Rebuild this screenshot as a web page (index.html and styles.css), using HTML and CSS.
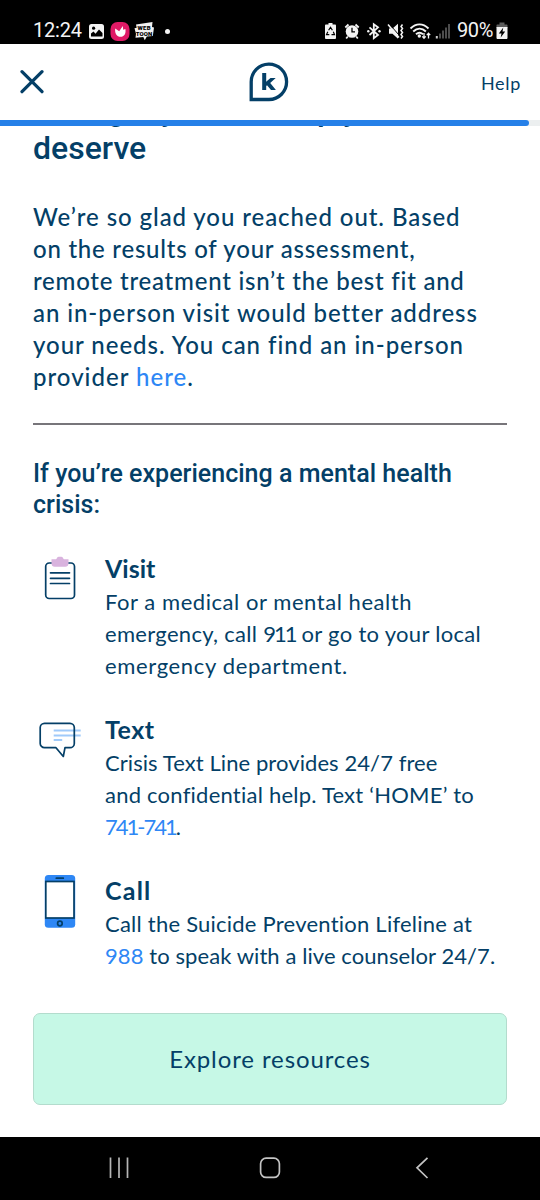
FILE: index.html
```html
<!DOCTYPE html>
<html lang="en">
<head>
<meta charset="utf-8">
<title>Get the help you deserve</title>
<link rel="stylesheet" href="styles.css">
</head>
<body>
<div class="screen">
  <div class="status">
    <span class="clock">12:24</span>
    <svg class="status-left" width="86" height="20" viewBox="0 0 86 20">
      <rect x="1" y="3" width="15" height="15" rx="2.5" fill="#f4f4f4"/>
      <circle cx="5.6" cy="7.2" r="1.6" fill="#000"/>
      <path d="M3 15.5v-3l2.5-2 2 2.3L11 8.5l3.500 3.500v3.500z" fill="#000"/>
      <rect x="22.500" y="1" width="19" height="19" rx="7" fill="#e01a66"/>
      <path d="M27.200 7.500l4 2.800 3.600-5.300.4 3.800 2.200-.8c.8 4.800-1.200 7.800-4.800 7.800-3.800 0-6-3.300-5.400-8.300z" fill="#fff"/>
      <path d="M48 3.500L64.500 1l-.5 5 2 .5-1.200 8.500-6 .6-2 3.600-1.500-3.200-7.800.8.500-4-1.500-5.500 2.200-.6z" fill="#f1f1f1"/>
      <text x="49.500" y="9.300" class="toon" textLength="13">WEB</text>
      <text x="47.800" y="14.800" class="toon" textLength="16.500">TOON</text>
      <circle cx="79.500" cy="10.500" r="2.500" fill="#f4f4f4"/>
    </svg>
    <svg class="status-right" width="128" height="20" viewBox="325 20 128 20">
      <path d="M329.500 22h4v1.600h2.300c.8 0 1.200.5 1.200 1.200v12c0 .8-.4 1.200-1.200 1.200h-8.600c-.8 0-1.200-.4-1.200-1.200v-12c0-.7.400-1.200 1.200-1.200h2.300z" fill="#f4f4f4"/>
      <path d="M329.600 29.300l1.900-3 1.900 3M334.300 30.800l1.200 2.800h-3M330.300 33.600h-2.800l1.300-2.900" fill="none" stroke="#000" stroke-width="1.200"/>
      <circle cx="353" cy="30.500" r="6.300" fill="#f4f4f4"/>
      <path d="M353 26.800v4h3" fill="none" stroke="#000" stroke-width="1.300"/>
      <path d="M346.300 26.500l3.200-3M359.700 26.500l-3.200-3M348.800 35.500l-1.600 2M357.200 35.500l1.600 2" stroke="#f4f4f4" stroke-width="1.800"/>
      <path d="M370.500 26.300l8.500 7.700-4.200 3.200v-14l4.200 3.200-8.500 7.600" fill="none" stroke="#f4f4f4" stroke-width="1.800"/>
      <circle cx="369.300" cy="30.200" r="1.200" fill="#f4f4f4"/><circle cx="380.500" cy="30.200" r="1.200" fill="#f4f4f4"/>
      <path d="M390 27.500h3.500l5.500-4.800v15l-5.500-5H390z" fill="#f4f4f4"/>
      <path d="M390.300 23l11 12.500" stroke="#000" stroke-width="1"/>
      <path d="M389 23.500l11 13" stroke="#f4f4f4" stroke-width="1.500"/>
      <path d="M403.500 23.500l-1.500 2 1.500 2-1.500 2 1.500 2-1.500 2 1.500 2-1.500 2" fill="none" stroke="#f4f4f4" stroke-width="1.500"/>
      <path d="M411.500 27.500c5.500-5.500 12.500-5.500 18 0M414.200 30.500c4-3.800 8.800-3.800 12.700 0M417 33.300c2.200-2 4.800-2 7 0" fill="none" stroke="#f4f4f4" stroke-width="1.900"/>
      <circle cx="420.300" cy="35" r="1.700" fill="#f4f4f4"/>
      <path d="M425 32v5.200m-1.700-1.800l1.700 1.900 1.700-1.900M429.500 37.500v-5.200m-1.700 1.800l1.700-1.900 1.700 1.900" fill="none" stroke="#f4f4f4" stroke-width="1.300"/>
      <path d="M437.800 37.500v-2.500" stroke="#d0d0d0" stroke-width="2"/>
      <path d="M441 37.500v-5M444 37.500v-8M447 37.500v-11M450 37.500v-14.500" stroke="#5a5a5a" stroke-width="1.700"/>
    </svg>
    <span class="percent">90%</span>
    <svg class="battery" width="12" height="18" viewBox="0 0 12 18">
      <path d="M3.500.500h5V2.500h2c.7 0 1 .4 1 1V6H.500V3.500c0-.6.300-1 1-1h2z" fill="#5c5c5c"/>
      <path d="M.500 5h11v10.800c0 .8-.4 1.200-1.200 1.200H1.700c-.8 0-1.200-.4-1.200-1.200z" fill="#f4f4f4"/>
      <path d="M7.300 5.500L2.800 11.500h2.700l-.8 4 4.500-6H6.500z" fill="#000"/>
    </svg>
  </div>
  <header class="topbar">
    <svg width="24" height="24" viewBox="0 0 24 24"><path d="M2 1.700l20 20M22 1.700l-20 20" stroke="#043f67" stroke-width="3.200" stroke-linecap="round"/></svg>
    <svg class="logo" width="40" height="40" viewBox="0 0 40 40">
      <path d="M2.200 37.500V20A17.700 17.700 0 1 1 20 37.500z" fill="none" stroke="#043f67" stroke-width="3.300"/>
      <path d="M15.200 11v17" fill="none" stroke="#043f67" stroke-width="4"/>
      <path d="M16.500 20.300L21.500 16h5.200l-5.500 5 5.700 7h-4.900l-4-4.800-1.500 1.300z" fill="#043f67"/>
    </svg>
    <span class="help">Help</span>
  </header>
  <div class="progress"><div class="progress-fill"></div></div>
  <main class="content">
    <h1>Let’s get you the help you<br>deserve</h1>
    <p class="intro">
      <span class="line s90">We’re so glad you reached out. Based</span>
      <span class="line s75">on the results of your assessment,</span>
      <span class="line s75">remote treatment isn’t the best fit and</span>
      <span class="line s90">an in-person visit would better address</span>
      <span class="line s95">your needs. You can find an in-person</span>
      <span class="line s100">provider <a>here</a>.</span>
    </p>
    <hr>
    <h2>If you’re experiencing a mental health<br>crisis:</h2>
    <section class="item">
      <svg class="icon" width="44" height="60" viewBox="0 0 44 60">
        <rect x="6.700" y="10" width="28.800" height="35.500" rx="3.500" fill="#fff" stroke="#043f67" stroke-width="1.700"/>
        <path d="M12.500 6.200h4c.8 0 1-.3 1.300-1 .5-1 1.200-1.400 3.200-1.400s2.700.4 3.200 1.400c.3.700.5 1 1.300 1h4v4.300c0 2-1.300 3.300-3.300 3.300H15.800c-2 0-3.300-1.300-3.300-3.300z" fill="#d9b3de"/>
        <path d="M11.500 19.800h19M11.500 25.300h19M11.500 30.500h19" stroke="#043f67" stroke-width="1.700" stroke-linecap="round"/>
      </svg>
      <div class="text">
        <h3>Visit</h3>
        <p>
          <span class="line s55">For a medical or mental health</span>
          <span class="line s35">emergency, call <span class="tight">911</span> or go to your local</span>
          <span class="line s65">emergency department.</span>
        </p>
      </div>
    </section>
    <section class="item">
      <svg class="icon" width="44" height="60" viewBox="0 0 44 60">
        <path d="M14.700 16.500h27M14.700 21.500h27M14.700 26h8.500" stroke="#a0cafa" stroke-width="2.200"/>
        <path d="M5.500 9.300h25.500a4.300 4.300 0 0 1 4.300 4.300v15.800a4.300 4.300 0 0 1-4.300 4.300H26L24.300 42.500 17 33.700H5.500a4.300 4.300 0 0 1-4.300-4.300V13.600a4.300 4.300 0 0 1 4.300-4.300z" fill="none" stroke="#043f67" stroke-width="1.700" stroke-linejoin="round"/>
      </svg>
      <div class="text">
        <h3 class="s50">Text</h3>
        <p>
          <span class="line s10">Crisis Text Line provides 24/7 free</span>
          <span class="line s20">and confidential help. Text ‘HOME’ to</span>
          <span class="line phone"><a>741-741</a>.</span>
        </p>
      </div>
    </section>
    <section class="item">
      <svg class="icon" width="44" height="60" viewBox="0 0 44 60">
        <rect x="5.800" y="0" width="30.400" height="52.700" rx="3.500" fill="#2e87f5"/>
        <rect x="6.800" y="6.500" width="28.200" height="36.500" fill="#fff" stroke="#043f67" stroke-width="1.700"/>
        <path d="M17.300 3.200h7" stroke="#043f67" stroke-width="1.700" stroke-linecap="round"/>
        <circle cx="20.900" cy="48.500" r="2.300" fill="none" stroke="#043f67" stroke-width="1.700"/>
      </svg>
      <div class="text">
        <h3 class="s120">Call</h3>
        <p>
          <span class="line s20">Call the Suicide Prevention Lifeline at</span>
          <span class="line s10"><a>988</a> to speak with a live counselor 24/7.</span>
        </p>
      </div>
    </section>
    <button class="explore">Explore resources</button>
  </main>
  <nav class="navbar">
    <svg width="20" height="22" viewBox="0 0 20 22"><path d="M1.500.500v20.500M10 .500v20.500M18.500.500v20.500" stroke="#b5b5b5" stroke-width="1.700"/></svg>
    <svg class="home" width="22" height="22" viewBox="0 0 22 22"><rect x="1.600" y="1.200" width="18.800" height="19.200" rx="5.500" fill="none" stroke="#c4c4c4" stroke-width="1.700"/></svg>
    <svg width="14" height="22" viewBox="0 0 14 22"><path d="M12.500.800L2 10.800l10.500 10.200" fill="none" stroke="#c4c4c4" stroke-width="1.700"/></svg>
  </nav>
</div>
</body>
</html>
```
FILE: styles.css
```css
* { box-sizing: border-box; }
body { margin: 0; background: #fff; color: #043f67; font-family: Lato, sans-serif; }
svg { display: block; flex: none; }
h1, h2, h3, p { margin: 0; }
a { color: #2e87f5; }

.screen { display: flex; flex-direction: column; width: 540px; height: 1200px; overflow: hidden; }

.status { display: flex; align-items: center; height: 44px; flex: none; padding: 17px 32px 0 33px; background: #000; color: #f4f4f4; font: 20px/27px Roboto, sans-serif; }
.clock { letter-spacing: -0.2px; width: 55px; }
.status-left { width: 86px; }
.toon { font: 900 6px Roboto, sans-serif; fill: #000; }
.status-right { margin-left: auto; }
.percent { width: 38px; margin-left: 5px; letter-spacing: -0.4px; }
.battery { margin-left: 1px; }

.topbar { display: grid; grid-template-columns: 228px 40px 1fr; align-items: center; height: 76px; flex: none; padding: 0 19px 0 20px; }
.logo { margin-left: 1px; }
.help { justify-self: end; padding-top: 1px; font-size: 18px; letter-spacing: 0.7px; }
.progress { height: 6px; flex: none; background: #eceff0; }
.progress-fill { width: 529px; height: 6px; background: #2680e8; border-radius: 0 3px 3px 0; }

.content { flex: 1; overflow: hidden; padding: 0 33px; }
h1 { margin-top: -35.500px; font: 500 32px/38px Roboto, sans-serif; white-space: nowrap; }
.line { display: block; white-space: nowrap; }
.intro { margin-top: 34px; font-size: 24px; line-height: 32px; font-weight: 500; }
hr { margin: 30.500px 0 0; border: 0; height: 1.500px; background: #77757a; }
h2 { margin-top: 33.500px; font: 500 25px/31px Roboto, sans-serif; letter-spacing: 0.02px; white-space: nowrap; }

.item { display: flex; gap: 22px; margin-top: 32px; padding-left: 6px; }
.item + .item { margin-top: 31px; }
.icon { margin-top: 1px; }
h3 { font-size: 25px; line-height: 32px; font-weight: 700; }
.item p { padding-top: 2px; font-size: 22px; line-height: 32px; }
.item .text { min-height: 97px; }
.tight { letter-spacing: -2px; }
.phone { letter-spacing: -2px; }

.s10 { letter-spacing: 0.08px; }
.s20 { letter-spacing: 0.23px; }
.s35 { letter-spacing: 0.31px; }
.s50 { letter-spacing: 0.5px; }
.s55 { letter-spacing: 0.55px; }
.s65 { letter-spacing: 0.65px; }
.s75 { letter-spacing: 0.76px; }
.s90 { letter-spacing: 0.92px; }
.s95 { letter-spacing: 0.97px; }
.s100 { letter-spacing: 1px; }
.s120 { letter-spacing: 1.2px; }

.explore { display: block; width: 474px; height: 92px; margin-top: 41px; padding: 0; border: 1px solid #b3dccd; border-radius: 7px; background: #c6f8e6; color: #043f67; font: 24px/32px Lato, sans-serif; letter-spacing: 0.9px; }

.navbar { display: flex; align-items: center; justify-content: space-between; height: 63px; flex: none; padding: 0 111px 1px 109px; background: #000; }
.home { margin-right: 4px; }
```
